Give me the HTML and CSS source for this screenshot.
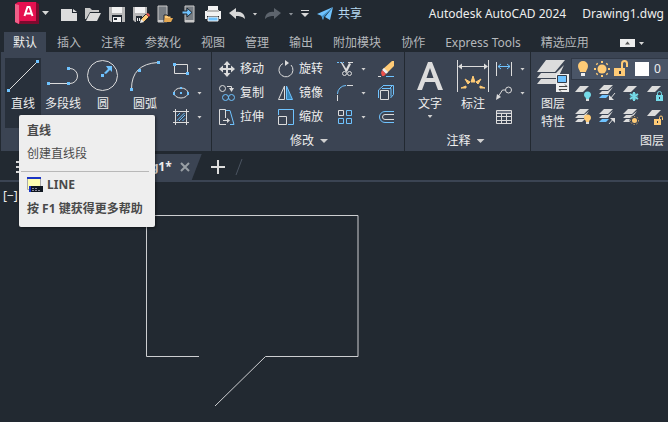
FILE: index.html
```html
<!DOCTYPE html>
<html lang="zh-CN">
<head>
<meta charset="utf-8">
<meta name="viewport" content="width=device-width, initial-scale=1">
<title>Autodesk AutoCAD 2024 - Drawing1.dwg</title>
<link rel="stylesheet" href="styles.css">
</head>
<body>
<header class="titlebar">
  <button class="app-menu" aria-label="应用程序菜单">
    <svg width="34" height="24" viewBox="0 0 34 24"><path d="M0 2L3 0H21V18L24 22H4L0 20Z" fill="#e51050"/><path d="M0 2L4 3V22L0 20Z" fill="#ef5f88"/><path d="M21 0L24 2V22H4L5 19H21Z" fill="#7d0a2e"/><path d="M3 0H21V19H4V3Z" fill="#e51050"/><path d="M9.500 14L12.500 5h2l3 9M11 11.500h5" fill="none" stroke="#fff" stroke-width="2"/><path d="M27 9h7l-3.500 4z" fill="#d8d8d8"/></svg>
  </button>
  <nav class="quick" aria-label="快速访问工具栏">
    <button class="qbtn" aria-label="新建"><svg width="18" height="18" viewBox="0 0 18 18"><path d="M1 4H12V8H17V16H1ZM13 4L17 7H13Z" fill="#dcdcdc"/></svg></button>
    <button class="qbtn" aria-label="打开"><svg width="18" height="18" viewBox="0 0 18 18"><path d="M1 3H6L8 5H15V7H6L2 14H1Z" fill="#c8c8c8"/><path d="M6 8H17L13 16H2Z" fill="#dcdcdc"/></svg></button>
    <button class="qbtn" aria-label="保存"><svg width="18" height="18" viewBox="0 0 18 18"><path d="M1 2H17V17H3L1 15Z" fill="#b8b8b8"/><path d="M4 2H14V8H4Z" fill="#f2f2f2"/><path d="M4 10H14V17H4Z" fill="#222931"/><path d="M5 12H13V17H5Z" fill="#f2f2f2"/><path d="M6 13h3v2H6z" fill="#222931"/></svg></button>
    <button class="qbtn" aria-label="另存为"><svg width="18" height="18" viewBox="0 0 18 18"><path d="M1 2H15V10L9 17H3L1 15Z" fill="#b8b8b8"/><path d="M3 2H13V8H3Z" fill="#f2f2f2"/><path d="M4 11H10V17H4Z" fill="#222931"/><path d="M5 13h1v3H5zM7 13h1v3H7z" fill="#eee"/><path d="M8 18L9 14L14 9L17 12L12 17Z" fill="#ffcb76" stroke="#222931"/><path d="M14 9L16 8L18 10L17 12Z" fill="#e9554d"/><path d="M8 18L9 14L12 17Z" fill="#eee"/></svg></button>
    <button class="qbtn" aria-label="从 Web 和 Mobile 中打开"><svg width="18" height="18" viewBox="0 0 18 18"><path d="M2 1H11V17H2Z" fill="#777d83" stroke="#c9c9c9"/><path d="M2 15h9v2H2z" fill="#c9c9c9"/><path d="M8 10H11L12 11H15V13H17L15 17H8Z" fill="#ffcb76" stroke="#222931"/><path d="M9 13h8l-2 4H8z" fill="#e5a851"/></svg></button>
    <button class="qbtn" aria-label="保存到 Web 和 Mobile"><svg width="18" height="18" viewBox="0 0 18 18"><path d="M5 1H14V17H5Z" fill="#777d83" stroke="#c9c9c9"/><path d="M5 15h9v2H5z" fill="#c9c9c9"/><path d="M2 6H7V3L12 7.500L7 12V9H2Z" fill="#6fc3ff" stroke="#222931"/></svg></button>
    <button class="qbtn" aria-label="打印"><svg width="18" height="18" viewBox="0 0 18 18"><path d="M4 1H14V5H4ZM1 6H17V14H15V11H3V14H1Z" fill="#f2f2f2"/><path d="M3 5H15V7H3Z" fill="#b8b8b8"/><path d="M4 12H14V16H4Z" fill="#6fc3ff" stroke="#f2f2f2"/></svg></button>
    <button class="qbtn" aria-label="放弃"><svg width="18" height="18" viewBox="0 0 18 18"><path d="M1 8L8 3V7C13 6 17 9 17 14C14 11 11 11 8 11V14Z" fill="#d8d8d8"/></svg></button>
    <button class="drop" aria-label="放弃列表"><i class="caret"></i></button>
    <button class="qbtn" aria-label="重做" disabled><svg width="18" height="18" viewBox="0 0 18 18"><path d="M17 8L10 3V7C5 6 1 9 1 14C4 11 7 11 10 11V14Z" fill="#5d646d"/></svg></button>
    <button class="drop" aria-label="重做列表"><i class="caret dim"></i></button>
    <button class="custom" aria-label="自定义快速访问工具栏"><svg width="10" height="10" viewBox="0 0 10 10"><path d="M1 1h8v1H1zM1 4h8L5 8z" fill="#d8d8d8"/></svg></button>
  </nav>
  <button class="share"><svg width="18" height="18" viewBox="0 0 18 18"><path d="M1 9L17 2L6 11ZM17 2L14 15L9 12ZM16 3L8 11L7 15L5 10Z" fill="#6fc3ff"/><path d="M6 11L16 3L8 12L7 15Z" fill="#3d8fc8"/></svg>共享</button>
  <h1 class="caption"><span>Autodesk AutoCAD 2024</span><span>Drawing1.dwg</span></h1>
</header>

<nav class="tabs" aria-label="功能区选项卡">
  <a class="tab active" href="#home">默认</a><a class="tab" href="#insert">插入</a><a class="tab" href="#annotate">注释</a><a class="tab" href="#parametric">参数化</a><a class="tab" href="#view">视图</a><a class="tab" href="#manage">管理</a><a class="tab" href="#output">输出</a><a class="tab" href="#addins">附加模块</a><a class="tab" href="#collaborate">协作</a><a class="tab" href="#express">Express Tools</a><a class="tab" href="#featured">精选应用</a>
  <button class="minimize" aria-label="最小化功能区"><svg width="26" height="10" viewBox="0 0 26 10"><path d="M0 1h15v8H0z" fill="#eee"/><path d="M5 6.500h5L7.500 3.500z" fill="#555"/><path d="M19 4h5l-2.500 3z" fill="#d8d8d8"/></svg></button>
</nav>

<main class="workspace">
<div class="ribbon">
  <section class="panel draw" aria-label="绘图">
    <div class="body">
      <button class="big active"><svg width="34" height="34" viewBox="0 0 34 34"><path d="M3 31L31 3" class="w"/><path d="M1 30h3v3H1zM30 1h3v3h-3z" class="bf"/></svg>直线</button>
      <button class="big wide"><svg width="34" height="34" viewBox="0 0 34 34"><path d="M3 24.500H22M22 9.500h2a7.500 7.500 0 0 1 0 15h-2" class="w"/><path d="M1 23h3v3H1zM21 23h3v3h-3zM21 8h3v3h-3z" class="bf"/></svg>多段线</button>
      <button class="big"><svg width="34" height="34" viewBox="0 0 34 34"><circle cx="16.500" cy="16.500" r="15" class="w"/><path d="M15 15h3v3h-3zM20 7h6v6l-2-2-4 4-2-1 4-4z" class="bf"/></svg>圆</button>
      <button class="big wider"><svg width="34" height="34" viewBox="0 0 34 34"><path d="M3.500 30Q3.500 5 30 3.500" class="w"/><path d="M2 29h3v3H2zM10 10h3v3h-3zM29 2h3v3h-3z" class="bf"/></svg>圆弧</button>
      <div class="stack">
        <button class="small" aria-label="矩形"><svg width="18" height="18" viewBox="0 0 18 18"><path d="M2.500 4.500h13v9h-13z" class="w"/><path d="M1 3h3v3H1zM14 12h3v3h-3z" class="bf"/></svg><i class="caret"></i></button>
        <button class="small" aria-label="椭圆"><svg width="18" height="18" viewBox="0 0 18 18"><ellipse cx="9" cy="9" rx="7" ry="5" class="w"/><path d="M1 8h2v3H1zM15 8h2v3h-2zM8 3h2v2H8zM8 8h2v2H8z" class="bf"/></svg><i class="caret"></i></button>
        <button class="small" aria-label="图案填充"><svg width="18" height="18" viewBox="0 0 18 18"><path d="M1 3.500h16M1 14.500h16M3.500 1v16M14.500 1v16" class="w"/><path d="M5 8L8 5M5 12.500L12.500 5M7 13L13 7M10.500 13L13 10.500" class="b"/></svg><i class="caret"></i></button>
      </div>
    </div>
  </section>

  <section class="panel modify" aria-label="修改">
    <div class="body">
      <div class="stack col">
        <button class="small"><svg width="18" height="18" viewBox="0 0 18 18"><path d="M8 5H5.500L9 1l3.500 4H10v3h3V5.500L17 9l-4 3.500V10h-3v3h2.500L9 17l-3.500-4H8v-3H5v2.500L1 9l4-3.500V8h3z" class="wf"/></svg>移动</button>
        <button class="small"><svg width="18" height="18" viewBox="0 0 18 18"><circle cx="4.500" cy="4.500" r="3" class="w"/><path d="M9 2.500h4.500V5" class="w"/><path d="M11 4h5l-2.500 4z" class="wf"/><circle cx="7.500" cy="13.500" r="3" class="b"/><circle cx="13.500" cy="13.500" r="3" class="b"/></svg>复制</button>
        <button class="small"><svg width="18" height="18" viewBox="0 0 18 18"><path d="M8 16.500H1.500V1.500H7.500V10M5 12.500h6" class="w"/><path d="M9 10l3 2.500L9 15z" class="wf"/><path d="M8 2.500h4l4 14h-4" class="b"/></svg>拉伸</button>
      </div>
      <div class="stack col">
        <button class="small"><svg width="18" height="18" viewBox="0 0 18 18"><path d="M6 3.500A7 7 0 1 0 14 5" class="w"/><path d="M8 0v6l4-3z" class="wf"/></svg>旋转</button>
        <button class="small"><svg width="18" height="18" viewBox="0 0 18 18"><path d="M7.500 2v13.500h-6z" class="w"/><path d="M9.500 2v13.500h6z" fill="#3684b6" stroke="#6fc3ff"/></svg>镜像</button>
        <button class="small"><svg width="18" height="18" viewBox="0 0 18 18"><path d="M1.500 7V1.500h15v15H11" class="b"/><path d="M1.500 8.500h8v8h-8z" class="w"/></svg>缩放</button>
      </div>
      <div class="stack third">
        <button class="small" aria-label="修剪"><svg width="18" height="18" viewBox="0 0 18 18"><path d="M1 2.500h7" class="b" stroke-dasharray="2 1"/><path d="M12 2.500h5" class="w"/><path d="M5 3l1-1 5 8-1 2zM13 3l2 1-4 8-2-1z" class="wf"/><circle cx="8.500" cy="13.500" r="2" class="w"/><circle cx="13.500" cy="13.500" r="2" class="w"/></svg><i class="caret"></i></button>
        <button class="small" aria-label="圆角"><svg width="18" height="18" viewBox="0 0 18 18"><path d="M1.500 17v-6M11 1.500h6" class="w"/><path d="M1.500 10A8.500 8.500 0 0 1 10 1.500" class="b"/></svg><i class="caret"></i></button>
        <button class="small" aria-label="阵列"><svg width="18" height="18" viewBox="0 0 18 18"><path d="M2.500 2.500h5v5h-5z" class="w"/><path d="M10.500 2.500h5v5h-5zM2.500 10.500h5v5h-5zM10.500 10.500h5v5h-5z" class="b"/></svg><i class="caret"></i></button>
      </div>
      <div class="stack">
        <button class="small" aria-label="删除"><svg width="18" height="18" viewBox="0 0 18 18"><path d="M6 9L15 1h2v5l-7 7z" fill="#ffcb76"/><path d="M5 10l2-2 4 4-2 2z" fill="#eee"/><path d="M4 13l1-3 4 4-2 2H5z" fill="#ed514b"/><path d="M1 16.500h3" class="w"/><path d="M9 16.500h8" class="b"/></svg></button>
        <button class="small" aria-label="分解"><svg width="18" height="18" viewBox="0 0 18 18"><path d="M1.500 14V6L6 2M6 1.500h10.500v9L13.500 14M5 4.500h9v8M13 4l3-3" class="b"/><path d="M3.500 6.500h8v9h-8z" class="w"/></svg></button>
        <button class="small" aria-label="偏移"><svg width="18" height="18" viewBox="0 0 18 18"><path d="M17 3.500H8a5.500 5.500 0 0 0 0 11h9" class="b"/><path d="M17 6.500H8a2.500 2.500 0 0 0 0 5h9" class="w"/></svg></button>
      </div>
    </div>
    <button class="panel-title">修改<i class="caret large"></i></button>
  </section>

  <section class="panel annotate" aria-label="注释">
    <div class="body">
      <button class="big widest"><svg width="34" height="34" viewBox="0 0 34 34"><path d="M4 31L15 3h4l11 28h-5l-3-8H12l-3 8zM13.500 19h7L17 9z" fill="#dcdcdc"/></svg>文字<i class="caret"></i></button>
      <button class="big"><svg width="34" height="34" viewBox="0 0 34 34"><path d="M1.500 1v32M32.500 1v32M3 7.500h28" class="w"/><path d="M2 7.500l4-3v6zM32 7.500l-4-3v6z" class="wf"/><path d="M5 29l5-2v2zM9 20l5 3-2 2zM17 17l2 6h-4zM25 20l-5 3 2 2zM29 29l-5-2v2z" fill="#ffcb76" stroke="#ffcb76"/></svg>标注</button>
      <div class="stack">
        <button class="small" aria-label="线性标注"><svg width="18" height="18" viewBox="0 0 18 18"><path d="M1.500 2v14M16.500 2v14" class="w"/><path d="M3 6.500h12M6 4L3 6.500 6 9M12 4l3 2.500L12 9" class="b"/></svg><i class="caret"></i></button>
        <button class="small" aria-label="引线"><svg width="18" height="18" viewBox="0 0 18 18"><circle cx="13.500" cy="6" r="3" class="w"/><path d="M10 6H7.500L3 13" class="w"/><path d="M1 16l1-6 4 3z" class="wf"/></svg><i class="caret"></i></button>
        <button class="small" aria-label="表格"><svg width="18" height="18" viewBox="0 0 18 18"><path d="M1.500 2.500h15v13h-15zM1 5.500h16M1 8.500h16M1 12.500h16M6.500 6v9M11.500 6v9" class="w"/><path d="M2 3h14v2H2z" fill="#687080"/></svg></button>
      </div>
    </div>
    <button class="panel-title">注释<i class="caret large"></i></button>
  </section>

  <section class="panel layers" aria-label="图层">
    <div class="body">
      <button class="big props"><svg width="34" height="34" viewBox="0 0 34 34"><path d="M1 13L10 1h19L19 13zM1 19l4-5h15l8-8-6 13zM1 25l4-5h15v5z" fill="#dcdcdc"/><path d="M20 15h13v18H20z" fill="#eee"/><path d="M21.500 16.500h9v7h-9z" fill="#6fc3ff" stroke="#333c49"/><path d="M23 27.500h8l-2-2M31 30.500h-8l2 2" fill="none" stroke="#444"/></svg>图层<br>特性</button>
      <div class="layer-tools">
        <button class="layer-combo" aria-label="当前图层 0">
          <svg width="18" height="18" viewBox="0 0 18 18"><path d="M6 12C6 10 4 9 4 6A5 5 0 0 1 14 6C14 9 12 10 12 12Z" fill="#ffcb76"/><path d="M7 13h4v3H7z" fill="#eee"/></svg>
          <svg width="18" height="18" viewBox="0 0 18 18"><circle cx="9" cy="9" r="4.500" fill="#ffcb76"/><path d="M9 1v2M9 15v2M1 9h2M15 9h2M3.500 3.500l1 1M13.500 13.500l1 1M3.500 14.500l1-1M13.500 4.500l1-1" stroke="#ffcb76" stroke-width="2"/></svg>
          <svg width="18" height="18" viewBox="0 0 18 18"><path d="M2 8h11v8H2z" fill="#ffcb76"/><path d="M10 8V3.500a2.500 2.500 0 0 1 5 0V7" fill="none" stroke="#ffcb76" stroke-width="2"/><path d="M7 11h2v3H7z" fill="#303948"/></svg>
          <i class="swatch"></i>0
        </button>
        <div class="layer-grid">
          <button class="small" aria-label="关"><svg width="18" height="18" viewBox="0 0 18 18"><path d="M1 8L6 2h9L9 8z" class="wf"/><path d="M12 15c0-2-2-2-2-4a3.500 3.500 0 0 1 7 0c0 2-2 2-2 4z" fill="#75dae8"/><path d="M12 15h3v2h-3z" class="wf"/></svg></button>
          <button class="small" aria-label="置为当前"><svg width="18" height="18" viewBox="0 0 18 18"><path d="M1 6L6 1h9l-5 5zM1 10l3-3h6l5-4-5 7z" class="wf"/><path d="M1 14l3-3h7l-3 3z" fill="#6fc3ff"/><path d="M17 9l-5 6" class="w"/><path d="M11 11v5h5z" class="wf"/></svg></button>
          <button class="small" aria-label="冻结"><svg width="18" height="18" viewBox="0 0 18 18"><path d="M1 8L6 2h9L9 8z" class="wf"/><path d="M12 8v9M8 10l8 5M8 15l8-5" stroke="#75dae8" stroke-width="2"/><circle cx="12" cy="12.500" r="3" fill="none" stroke="#75dae8"/></svg></button>
          <button class="small" aria-label="锁定"><svg width="18" height="18" viewBox="0 0 18 18"><path d="M1 8L6 2h9L9 8z" class="wf"/><path d="M10 11h7v6h-7z" fill="#75dae8"/><path d="M11.500 11V9.500a2 2 0 0 1 4 0V11" fill="none" stroke="#75dae8"/><path d="M13 13h1v2h-1z" fill="#303948"/></svg></button>
          <button class="small" aria-label="打开所有图层"><svg width="18" height="18" viewBox="0 0 18 18"><path d="M1 6L6 1h9l-5 5zM1 10l3-3h6l5-4-5 7zM1 14l3-3h7l-3 3z" class="wf"/><path d="M12 14c0-2-2-2-2-4a3.500 3.500 0 0 1 7 0c0 2-2 2-2 4z" fill="#ffcb76"/><path d="M12 14h3v2h-3z" class="wf"/></svg></button>
          <button class="small" aria-label="匹配图层"><svg width="18" height="18" viewBox="0 0 18 18"><path d="M1 6L6 1h9l-5 5zM1 10l3-3h6l5-4-5 7z" class="wf"/><path d="M1 14l3-3h7l-3 3z" fill="#6fc3ff"/><path d="M11 16l5-6" class="w"/><path d="M12 10h5v5z" class="wf"/></svg></button>
          <button class="small" aria-label="解冻所有图层"><svg width="18" height="18" viewBox="0 0 18 18"><path d="M1 6L6 1h9l-5 5zM1 10l3-3h6l5-4-5 7zM1 14l3-3h7l-3 3z" class="wf"/><circle cx="12.500" cy="12.500" r="5" fill="#3b4453"/><circle cx="12.500" cy="12.500" r="2.500" fill="#ffcb76"/><circle cx="12.500" cy="12.500" r="4" fill="none" stroke="#ffcb76" stroke-dasharray="1 2"/></svg></button>
          <button class="small" aria-label="解锁"><svg width="18" height="18" viewBox="0 0 18 18"><path d="M1 8L6 2h9L9 8z" class="wf"/><path d="M8 11h7v6H8z" fill="#ffcb76"/><path d="M13.500 11V9.500a1.500 1.500 0 0 1 3 0V12" fill="none" stroke="#ffcb76"/><path d="M11 13h1v2h-1z" fill="#303948"/></svg></button>
        </div>
      </div>
    </div>
    <button class="panel-title">图层<i class="caret large"></i></button>
  </section>
</div>

<nav class="documents" aria-label="文件选项卡">
  <button class="file-menu" aria-label="文件菜单"><svg width="14" height="14" viewBox="0 0 14 14"><path d="M0 2h12M0 7h12M0 12h12" stroke="#ddd" stroke-width="2"/></svg></button>
  <a class="doc current" href="#drawing">Drawing1*<svg width="10" height="10" viewBox="0 0 10 10"><path d="M1 1l8 8M9 1L1 9" stroke="#999fa5" stroke-width="2"/></svg></a>
  <button class="new-doc" aria-label="新图形"><svg width="14" height="14" viewBox="0 0 14 14"><path d="M7 0v14M0 7h14" stroke="#ddd" stroke-width="2"/></svg></button>
  <svg class="slash" width="8" height="16" viewBox="0 0 8 16"><path d="M1 16L7 0" stroke="#4b5461" fill="none"/></svg>
</nav>

<div class="canvas" id="drawing">
  <span class="viewport-label">[−]</span>
  <svg class="geometry" width="214" height="193" viewBox="0 0 214 193" aria-label="图形"><path d="M54 142.500H1.500V1.500H213V142.500H120.500L70 192" fill="none" stroke="#cdced1" stroke-width="1"/></svg>
</div>
<aside class="tooltip" role="tooltip">
  <strong>直线</strong>
  <p>创建直线段</p>
  <hr>
  <div class="command"><svg width="16" height="16" viewBox="0 0 16 16"><path d="M.500.500h13v12H.500z" fill="#ffffb0" stroke="#aaa"/><path d="M0 0h14v2H0z" fill="#1b35c4"/><path d="M2 9h14v6H2z" fill="#111820"/><path d="M2 9h2v6H2z" fill="#1b35c4"/><path d="M5 11.500h5M5 13.500h8" stroke="#889" stroke-dasharray="2 1"/></svg><strong>LINE</strong></div>
  <strong>按 F1 键获得更多帮助</strong>
</aside>
</main>
</body>
</html>
```

FILE: styles.css
```css
:root {
  --dark: #222931;
  --ribbon: #3b4453;
  --blue: #6fc3ff;
  --light: #dcdcdc;
}

* { box-sizing: border-box; }

body {
  margin: 0;
  min-height: 100vh;
  display: flex;
  flex-direction: column;
  overflow: hidden;
  background: var(--dark);
  color: #eee;
  font: 12px/16px "Noto Sans", "Noto Sans CJK SC", sans-serif;
}

button {
  margin: 0;
  padding: 0;
  border: 0;
  background: none;
  color: inherit;
  font: inherit;
  white-space: nowrap;
}

a { color: inherit; text-decoration: none; }
svg { display: block; flex: none; }

.w { fill: none; stroke: var(--light); }
.b { fill: none; stroke: var(--blue); }
.wf { fill: var(--light); }
.bf { fill: var(--blue); }

.caret {
  flex: none;
  width: 5px;
  height: 3px;
  background: #d0d0d0;
  clip-path: polygon(0 0, 100% 0, 50% 100%);
}
.caret.large { width: 8px; height: 4px; }
.caret.dim { background: #8d9298; }

.titlebar {
  display: flex;
  align-items: center;
  height: 32px;
  padding: 0 4px 4px 15px;
}
.app-menu { margin-right: 8px; }
.quick { display: flex; align-items: center; }
.qbtn, .drop, .custom { display: flex; align-items: center; justify-content: center; height: 24px; }
.qbtn { width: 24px; }
.drop { width: 12px; }
.custom { width: 16px; }
.share { display: flex; align-items: center; gap: 4px; margin-left: 3px; color: #b5d8f0; }
.caption {
  display: flex;
  gap: 16px;
  margin: 0 0 0 auto;
  font-size: 12px;
  font-weight: 400;
  white-space: nowrap;
}

.tabs { display: flex; height: 20px; padding-left: 4px; color: #b5b8bc; white-space: nowrap; }
.tab { padding: 3px 10px 1px; }
.tab.active { padding: 3px 9px 1px; margin-right: 1px; background: var(--ribbon); color: #eee; }
.minimize { display: flex; align-items: center; margin: 2px 0 0 21px; }

.workspace { position: relative; display: flex; flex: 1; flex-direction: column; }

.ribbon { display: flex; height: 99px; margin-left: 1px; background: var(--ribbon); overflow: hidden; }
.panel {
  flex: none;
  display: flex;
  flex-direction: column;
  justify-content: space-between;
  padding: 5px 4px 1px;
  border-right: 1px solid var(--dark);
}
.draw { width: 211px; }
.modify { width: 193px; padding-left: 6px; }
.annotate { width: 126px; padding-left: 0; }
.layers { width: 253px; padding-right: 0; }
.body { display: flex; }
.panel-title { display: flex; align-items: center; justify-content: center; gap: 6px; height: 18px; }

.big {
  display: flex;
  flex-direction: column;
  align-items: center;
  width: 36px;
  height: 70px;
  margin-top: 1px;
  padding-top: 1px;
  line-height: 18px;
}
.big svg { margin-bottom: 2px; }
.big .caret { margin-top: 2px; }
.big.active { background: #28303b; }
.big.wide { width: 44px; }
.big.wider { width: 48px; }
.big.widest { width: 50px; }
.annotate .stack { margin-left: 4px; }

.stack { display: flex; flex-direction: column; }
.small { display: flex; align-items: center; gap: 4px; height: 24px; }
.stack .caret { margin-left: 3px; }
.draw .stack { padding-left: 3px; }
.col { width: 59px; }
.third { width: 41px; }

.layer-tools { flex: 1; }
.layer-combo {
  display: flex;
  align-items: center;
  gap: 1px;
  width: 100%;
  height: 22px;
  margin-top: 1px;
  padding-left: 2px;
  border: 1px solid #303846;
  background: #4a5567;
}
.swatch { width: 14px; height: 14px; margin: 0 4px; background: #fff; }
.layer-grid { display: grid; grid-template-columns: repeat(4, 24px); padding: 1px 3px; }

.documents {
  display: flex;
  align-items: center;
  height: 28px;
  margin-top: 3px;
  border-bottom: 2px solid var(--ribbon);
}
.file-menu { margin-left: 16px; }
.doc { display: flex; align-items: center; height: 26px; }
.doc.current {
  flex: none;
  gap: 8px;
  margin-left: 56px;
  padding: 0 12px 0 22px;
  background: var(--ribbon);
  font-weight: 700;
  clip-path: polygon(10px 0, 100% 0, calc(100% - 10px) 100%, 0 100%);
}
.new-doc { margin-left: 9px; }
.slash { margin-left: 10px; }

.canvas { position: relative; flex: 1; padding: 6px 3px; }
.geometry { position: absolute; left: 145px; top: 32px; }

.tooltip {
  position: absolute;
  left: 19px;
  top: 63px;
  padding: 8px 12px 10px 8px;
  border-radius: 2px;
  background: #eee;
  color: #4a4a4a;
  box-shadow: 1px 1px 3px #0008;
  white-space: nowrap;
}
.tooltip strong { display: block; }
.tooltip p { margin: 7px 0 9px; }
.tooltip hr { height: 1px; margin: 0 -6px 5px; border: 0; background: #b8b8b8; }
.command { display: flex; align-items: center; gap: 4px; margin-bottom: 8px; }
```
